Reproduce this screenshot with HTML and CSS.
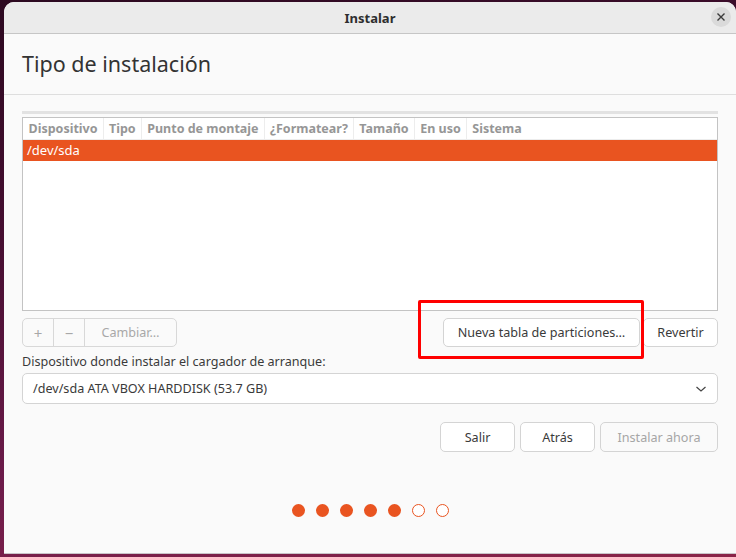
FILE: index.html
```html
<!DOCTYPE html>
<html lang="es">
<head>
<meta charset="utf-8">
<title>Instalar</title>
<link rel="stylesheet" href="styles.css">
</head>
<body>
<div class="window">
  <div class="titlebar">
    <span class="title">Instalar</span>
    <span class="close">
      <svg width="10" height="10" viewBox="0 0 10 10"><path d="M1.5 1.5 L8.5 8.5 M8.5 1.5 L1.5 8.5" stroke="#3a3a3a" stroke-width="1.4" fill="none"/></svg>
    </span>
  </div>
  <div class="header">
    <h1>Tipo de instalación</h1>
  </div>
  <div class="content">
    <div class="partbar"></div>
    <div class="table">
      <div class="thead">
        <span class="th c1">Dispositivo</span>
        <span class="th c2">Tipo</span>
        <span class="th c3">Punto de montaje</span>
        <span class="th c4">¿Formatear?</span>
        <span class="th c5">Tamaño</span>
        <span class="th c6">En uso</span>
        <span class="th c7">Sistema</span>
      </div>
      <div class="row selected">/dev/sda</div>
    </div>
    <div class="toolrow">
      <div class="group">
        <span class="gbtn sq">+</span>
        <span class="gbtn sq">−</span>
        <span class="gbtn wide">Cambiar…</span>
      </div>
      <div class="right">
        <span class="highlight">
          <span class="btn newtable">Nueva tabla de particiones…</span>
        </span>
        <span class="btn revert">Revertir</span>
      </div>
    </div>
    <div class="label">Dispositivo donde instalar el cargador de arranque:</div>
    <div class="combo">
      <span>/dev/sda ATA VBOX HARDDISK (53.7 GB)</span>
      <svg width="12" height="8" viewBox="0 0 12 8"><path d="M1.5 2 L6 6 L10.5 2" stroke="#444" stroke-width="1.2" fill="none"/></svg>
    </div>
    <div class="actions">
      <span class="btn act">Salir</span>
      <span class="btn act">Atrás</span>
      <span class="btn act disabled">Instalar ahora</span>
    </div>
    <div class="dots">
      <span class="dot on"></span><span class="dot on"></span><span class="dot on"></span><span class="dot on"></span><span class="dot on"></span><span class="dot off"></span><span class="dot off"></span>
    </div>
  </div>
</div>
</body>
</html>
```

FILE: styles.css
```css
html, body {
  margin: 0;
  padding: 0;
  height: 100%;
}
body {
  width: 736px;
  height: 557px;
  overflow: hidden;
  background: linear-gradient(170deg, #2c0920 0%, #460e31 35%, #6c1b4a 70%, #8a2448 100%);
  font-family: "Noto Sans", "Open Sans", sans-serif;
  font-size: 12.6px;
  color: #3d3d3d;
}
.window {
  margin: 2px 0 0 4px;
  width: 732px;
  height: 551px;
  background: #fafafa;
  border-radius: 10px 10px 0 0;
  display: flex;
  flex-direction: column;
  box-shadow: 0 1px 0 #c9c3c8;
  overflow: hidden;
}
.titlebar {
  height: 31px;
  flex: none;
  background: #ebebeb;
  border-bottom: 1px solid #c6c6c6;
  position: relative;
  display: flex;
  align-items: center;
  justify-content: center;
}
.title {
  font-weight: bold;
  font-size: 13px;
  color: #2e2e2e;
}
.close {
  position: absolute;
  right: 5px;
  top: 5px;
  width: 20px;
  height: 20px;
  border-radius: 50%;
  background: #dadada;
  display: flex;
  align-items: center;
  justify-content: center;
}
.header {
  height: 60px;
  flex: none;
  border-bottom: 1px solid #dedede;
  display: flex;
  align-items: center;
  padding-left: 18px;
}
h1 {
  margin: 0 0 2px 0;
  font-weight: normal;
  font-size: 21.5px;
  color: #333;
}
.content {
  padding: 0 18px 0 18px;
  display: flex;
  flex-direction: column;
}
.partbar {
  margin-top: 16px;
  height: 3px;
  background: #e2e2e2;
}
.table {
  margin-top: 3px;
  height: 192px;
  border: 1px solid #c3c3c3;
  background: #fff;
}
.thead {
  height: 21px;
  display: flex;
  align-items: center;
  border-bottom: 1px solid #ececec;
}
.th {
  font-weight: bold;
  font-size: 12.5px;
  color: #969696;
  padding: 0 5px 0 5.5px;
  height: 21px;
  line-height: 21px;
  border-right: 1px solid #ededed;
  white-space: nowrap;
}
.th.c7 { border-right: none; }
.row {
  height: 21px;
  line-height: 21px;
  padding-left: 4px;
  font-size: 13px;
}
.row.selected {
  background: #e95420;
  color: #fff;
}
.toolrow {
  margin-top: 7px;
  height: 29px;
  display: flex;
  justify-content: space-between;
  align-items: center;
}
.group {
  display: flex;
  height: 27px;
  border: 1px solid #d8d8d8;
  border-radius: 5px;
  background: #fafafa;
}
.gbtn {
  display: flex;
  align-items: center;
  justify-content: center;
  color: #a8a8a8;
}
.gbtn.sq {
  width: 30px;
  border-right: 1px solid #d8d8d8;
  font-size: 15px;
}
.gbtn.wide {
  width: 91px;
}
.right {
  display: flex;
  align-items: center;
  gap: 3px;
  position: relative;
}
.btn {
  display: flex;
  align-items: center;
  justify-content: center;
  height: 27px;
  border: 1px solid #d4d4d4;
  border-radius: 5px;
  background: #fff;
  color: #3a3a3a;
  box-sizing: border-box;
  white-space: nowrap;
}
.newtable {
  width: 197px;
  height: 29px;
}
.revert {
  width: 75px;
  height: 29px;
}
.highlight {
  position: relative;
  display: flex;
}
.highlight::after {
  content: "";
  position: absolute;
  left: -25px;
  top: -18px;
  width: 220px;
  height: 53px;
  border: 3.5px solid #ff0000;
  border-radius: 2px;
}
.label {
  margin-top: 5px;
  color: #3a3a3a;
  height: 20px;
  line-height: 20px;
}
.combo {
  margin-top: 1px;
  height: 29px;
  border: 1px solid #d4d4d4;
  border-radius: 5px;
  background: #fff;
  display: flex;
  align-items: center;
  justify-content: space-between;
  padding: 0 10px 0 10px;
  color: #3a3a3a;
}
.actions {
  margin-top: 18px;
  display: flex;
  justify-content: flex-end;
  gap: 5px;
}
.act {
  width: 75px;
  height: 30px;
}
.act.disabled {
  width: 118px;
  color: #a6a6a6;
  background: #fafafa;
}
.dots {
  margin-top: 52px;
  display: flex;
  justify-content: center;
  gap: 11px;
}
.dot {
  width: 13px;
  height: 13px;
  border-radius: 50%;
  box-sizing: border-box;
}
.dot.on {
  background: #e95420;
}
.dot.off {
  border: 1.5px solid #e95420;
  background: #fff;
}
```
